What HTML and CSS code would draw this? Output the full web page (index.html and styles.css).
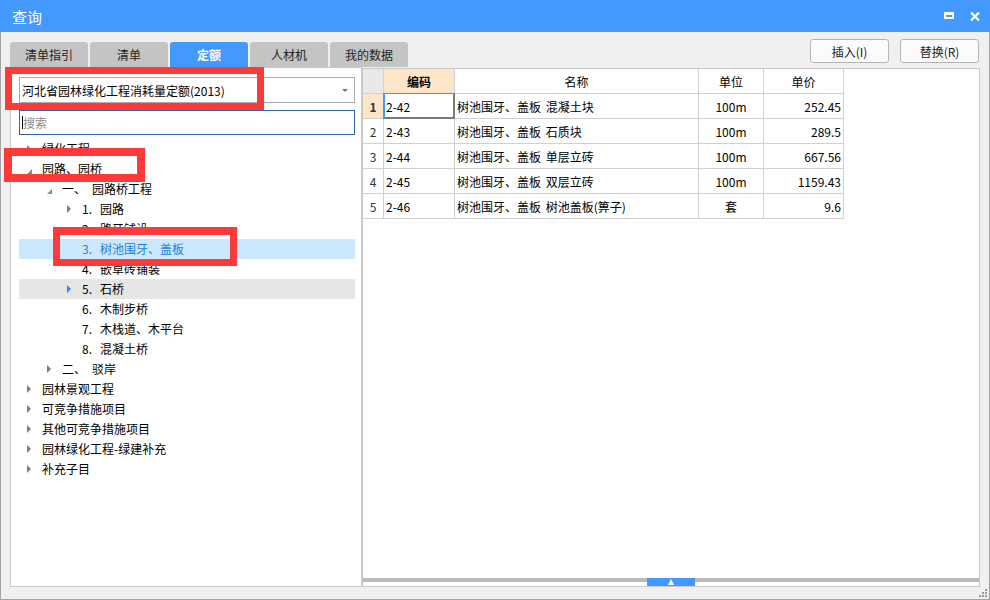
FILE: index.html
```html
<!DOCTYPE html>
<html lang="zh-CN">
<head>
<meta charset="utf-8">
<title>查询</title>
<link rel="stylesheet" href="styles.css">
</head>
<body>
<div class="window">
  <div class="titlebar">
    <span class="title">查询</span>
    <div class="winbtns">
      <span class="maxbtn"></span>
      <svg class="closebtn" width="10" height="9" viewBox="0 0 10 9"><path d="M1 0.5 L9 8.5 M9 0.5 L1 8.5" stroke="#fff" stroke-width="2.2" fill="none"/></svg>
    </div>
  </div>

  <div class="topbar">
    <div class="tabs">
      <div class="tab">清单指引</div>
      <div class="tab">清单</div>
      <div class="tab active">定额</div>
      <div class="tab">人材机</div>
      <div class="tab">我的数据</div>
    </div>
    <div class="buttons">
      <div class="btn">插入(I)</div>
      <div class="btn">替换(R)</div>
    </div>
  </div>

  <div class="panels">
    <div class="left">
      <div class="select">
        <span>河北省园林绿化工程消耗量定额(2013)</span>
        <span class="caret-down"></span>
      </div>
      <div class="search"><span class="cursor"></span><span class="ph">搜索</span></div>
      <div class="tree">
        <div class="row l0"><span class="tg"><span class="tri"></span></span><span>绿化工程</span></div>
        <div class="row l0"><span class="tg"><span class="exp"></span></span><span>园路、园桥</span></div>
        <div class="row l1"><span class="tg"><span class="exp"></span></span><span class="pre">一、</span><span>园路桥工程</span></div>
        <div class="row l2"><span class="tg"><span class="tri"></span></span><span class="num">1.</span><span>园路</span></div>
        <div class="row l2"><span class="tg"></span><span class="num">2.</span><span>路牙铺设</span></div>
        <div class="row l2 sel"><span class="tg"></span><span class="num">3.</span><span>树池围牙、盖板</span></div>
        <div class="row l2"><span class="tg"></span><span class="num">4.</span><span>嵌草砖铺装</span></div>
        <div class="row l2 hover"><span class="tg"><span class="tri blue"></span></span><span class="num">5.</span><span>石桥</span></div>
        <div class="row l2"><span class="tg"></span><span class="num">6.</span><span>木制步桥</span></div>
        <div class="row l2"><span class="tg"></span><span class="num">7.</span><span>木栈道、木平台</span></div>
        <div class="row l2"><span class="tg"></span><span class="num">8.</span><span>混凝土桥</span></div>
        <div class="row l1"><span class="tg"><span class="tri"></span></span><span class="pre">二、</span><span>驳岸</span></div>
        <div class="row l0"><span class="tg"><span class="tri"></span></span><span>园林景观工程</span></div>
        <div class="row l0"><span class="tg"><span class="tri"></span></span><span>可竞争措施项目</span></div>
        <div class="row l0"><span class="tg"><span class="tri"></span></span><span>其他可竞争措施项目</span></div>
        <div class="row l0"><span class="tg"><span class="tri"></span></span><span>园林绿化工程-绿建补充</span></div>
        <div class="row l0"><span class="tg"><span class="tri"></span></span><span>补充子目</span></div>
      </div>
    </div>

    <div class="right">
      <div class="gridwrap">
        <div class="grid">
          <div class="c corner"></div>
          <div class="c hc peach">编码</div>
          <div class="c hc">名称</div>
          <div class="c hc">单位</div>
          <div class="c hc">单价</div>

          <div class="c rh peach">1</div>
          <div class="c code focus">2-42</div>
          <div class="c name">树池围牙、盖板 混凝土块</div>
          <div class="c unit">100m</div>
          <div class="c price">252.45</div>

          <div class="c rh">2</div>
          <div class="c code">2-43</div>
          <div class="c name">树池围牙、盖板 石质块</div>
          <div class="c unit">100m</div>
          <div class="c price">289.5</div>

          <div class="c rh">3</div>
          <div class="c code">2-44</div>
          <div class="c name">树池围牙、盖板 单层立砖</div>
          <div class="c unit">100m</div>
          <div class="c price">667.56</div>

          <div class="c rh">4</div>
          <div class="c code">2-45</div>
          <div class="c name">树池围牙、盖板 双层立砖</div>
          <div class="c unit">100m</div>
          <div class="c price">1159.43</div>

          <div class="c rh">5</div>
          <div class="c code">2-46</div>
          <div class="c name">树池围牙、盖板 树池盖板(箅子)</div>
          <div class="c unit">套</div>
          <div class="c price">9.6</div>
        </div>
      </div>
      <div class="split">
        <span class="bar"></span>
        <span class="handle"><span class="up"></span></span>
        <span class="bar"></span>
      </div>
    </div>
  </div>

  <div class="footer">
    <svg width="9" height="9" viewBox="0 0 9 9" fill="#9a9a9a">
      <rect x="6" y="0" width="2" height="2"/>
      <rect x="3" y="3" width="2" height="2"/><rect x="6" y="3" width="2" height="2"/>
      <rect x="0" y="6" width="2" height="2"/><rect x="3" y="6" width="2" height="2"/><rect x="6" y="6" width="2" height="2"/>
    </svg>
  </div>

  <div class="mark m1"></div>
  <div class="mark m2"></div>
  <div class="mark m3"></div>
</div>
</body>
</html>
```

FILE: styles.css
```css
* { box-sizing: border-box; }

body {
  margin: 0;
  font-family: "Noto Sans CJK SC", "Noto Sans", sans-serif;
  font-size: 12px;
  color: #000;
  background: #fff;
}

.window {
  position: relative;
  width: 990px;
  height: 600px;
  border: 1px solid #a3a3a3;
  border-top: none;
  background: #f0f0f0;
  display: flex;
  flex-direction: column;
}

.titlebar {
  height: 32px;
  margin: 0 -1px;
  padding: 0 10px 0 12px;
  background: #4499ff;
  color: #fff;
  display: flex;
  align-items: center;
  font-size: 15px;
}
.titlebar .title { flex: 1; }
.winbtns {
  display: flex;
  align-items: center;
  gap: 16px;
}
.maxbtn {
  width: 10px;
  height: 7px;
  border: 2px solid #fff;
  border-top-width: 3px;
  margin-top: -1px;
}
.closebtn { display: block; }

.topbar {
  height: 35px;
  padding: 0 10px 0 9px;
  display: flex;
  justify-content: space-between;
}
.tabs {
  align-self: flex-end;
  display: flex;
  gap: 2px;
  height: 25px;
}
.tab {
  width: 78px;
  height: 25px;
  background: #c4c4c4;
  border-radius: 3px 3px 0 0;
  color: #222;
  display: flex;
  align-items: center;
  justify-content: center;
}
.tab.active {
  background: #4499ff;
  color: #fff;
  font-weight: bold;
}
.buttons {
  display: flex;
  gap: 11px;
  padding-top: 7px;
}
.btn {
  width: 79px;
  height: 24px;
  border: 1px solid #b5b5b5;
  border-radius: 3px;
  background: #fbfbfb;
  color: #222;
  display: flex;
  align-items: center;
  justify-content: center;
}

.panels {
  height: 520px;
  padding: 0 9px;
  display: flex;
}

.left {
  width: 352px;
  height: 520px;
  background: #fff;
  border: 1px solid #c9c9c9;
  padding: 9px 6px 0 8px;
}
.select {
  height: 26px;
  border: 1px solid #acacac;
  padding: 0 6px 0 2px;
  display: flex;
  align-items: center;
  justify-content: space-between;
}
.caret-down {
  width: 0;
  height: 0;
  border-left: 3px solid transparent;
  border-right: 3px solid transparent;
  border-top: 3px solid #777;
}
.search {
  margin-top: 7px;
  height: 25px;
  border: 1px solid #2f62a8;
  padding-left: 2px;
  display: flex;
  align-items: center;
}
.cursor {
  width: 1px;
  height: 13px;
  background: #000;
}
.ph { color: #8c8c8c; }

.tree { margin-top: 4px; }
.row {
  height: 20px;
  display: flex;
  align-items: center;
  padding-left: 8px;
  padding-bottom: 2px;
  white-space: nowrap;
}
.row.l1 { padding-left: 28px; }
.row.l2 { padding-left: 48px; }
.row.sel { background: #cce8ff; color: #1b7fe0; }
.row.hover { background: #e6e6e6; }
.tg {
  width: 15px;
  height: 18px;
  display: flex;
  align-items: center;
  margin-top: 2px;
}
.tri {
  width: 0;
  height: 0;
  border-left: 4px solid #7d7d7d;
  border-top: 4px solid transparent;
  border-bottom: 4px solid transparent;
}
.tri.blue { border-left-color: #2a8cf0; }
.exp {
  width: 0;
  height: 0;
  border-bottom: 5px solid #8a8a8a;
  border-left: 5px solid transparent;
  margin-top: 4px;
}
.num { display: inline-block; width: 18px; }
.pre { display: inline-block; width: 30px; }

.right {
  flex: 1;
  height: 519px;
  margin-top: 1px;
  background: #fff;
  border: 1px solid #c9c9c9;
  display: flex;
  flex-direction: column;
}
.gridwrap { flex: 1; }
.grid {
  display: grid;
  grid-template-columns: 21px 71px 244px 65px 80px;
  grid-auto-rows: 25px;
}
.c {
  border-right: 1px solid #d0d0d0;
  border-bottom: 1px solid #d0d0d0;
  display: flex;
  align-items: center;
  white-space: nowrap;
  position: relative;
}
.hc, .rh, .unit { justify-content: center; }
.corner { background: #e8e8e8; }
.peach { background: #fde6c8; font-weight: bold; }
.rh { color: #333; }
.code { padding-left: 2px; }
.name { padding-left: 2px; word-spacing: 2px; }
.price { justify-content: flex-end; padding-right: 2px; }
.focus::after {
  content: "";
  position: absolute;
  top: -1px;
  left: -1px;
  right: -1px;
  bottom: -1px;
  border-top: 1px solid #3d9bff;
  border-left: 2px solid #3d9bff;
  border-right: 2px solid #7a7a7a;
  border-bottom: 2px solid #7a7a7a;
}

.split {
  height: 8px;
  display: flex;
  align-items: flex-start;
}
.split .bar {
  flex: 1;
  height: 4px;
  background: #bababa;
}
.split .handle {
  width: 48px;
  height: 8px;
  background: #4499ff;
  display: flex;
  align-items: center;
  justify-content: center;
}
.split .up {
  width: 0;
  height: 0;
  border-left: 3px solid transparent;
  border-right: 3px solid transparent;
  border-bottom: 6px solid #fff;
}

.footer {
  height: 12px;
  display: flex;
  justify-content: flex-end;
  align-items: flex-end;
  padding: 0 1px 1px 0;
}

.mark {
  position: absolute;
  border: 7px solid #fd3a3a;
}
.m1 { left: 4px; top: 67px; width: 259px; height: 43px; }
.m2 { left: 3px; top: 148px; width: 141px; height: 34px; border-width: 8px; }
.m3 { left: 52px; top: 227px; width: 184px; height: 39px; border-top-width: 8px; }
```
